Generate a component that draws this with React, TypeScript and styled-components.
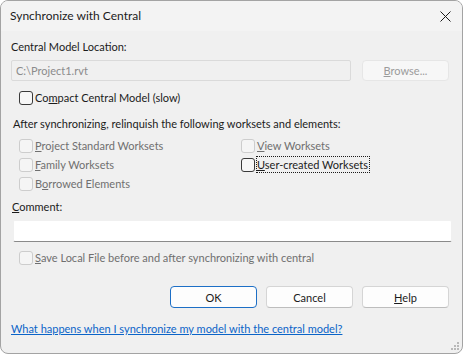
import styled, { createGlobalStyle, css } from "styled-components"

const FONT = `Lato, "Noto Sans", sans-serif`

const GlobalStyle = createGlobalStyle`
  html, body {
    margin: 0;
    padding: 0;
    background: #ffffff;
  }
  body {
    font-family: ${FONT};
    font-size: 11px;
    color: #1b1b1b;
  }
`

const Window = styled.div`
  position: relative;
  box-sizing: border-box;
  width: 463px;
  height: 354px;
  border: 1px solid #a3a3a3;
  border-radius: 8px;
  background: #f0f0f0;
  overflow: hidden;
  display: flex;
  flex-direction: column;
`

const TitleBar = styled.div`
  height: 30px;
  flex-shrink: 0;
  display: flex;
  align-items: center;
  justify-content: space-between;
  padding: 0 9px 0 9px;
  background: #f3f3f3;
`

const Title = styled.span`
  font-size: 12px;
  line-height: 16px;
  color: #1b1b1b;
`

const CloseButton = styled.button`
  width: 16px;
  height: 16px;
  padding: 0;
  border: none;
  background: transparent;
  display: flex;
  align-items: center;
  justify-content: center;
`

const Body = styled.div`
  display: flex;
  flex-direction: column;
  padding: 0 12px 0 9px;
`

const Label = styled.div<{ $top: number; $indent?: number }>`
  margin-top: ${(p) => p.$top}px;
  margin-left: ${(p) => p.$indent ?? 0}px;
  line-height: 16px;
  height: 16px;
  white-space: nowrap;
`

const LocationRow = styled.div`
  margin-top: 5px;
  display: flex;
  gap: 11px;
  height: 21px;
`

const DisabledInput = styled.div`
  flex: 1;
  box-sizing: border-box;
  margin-left: 1px;
  border: 1px solid #dadada;
  border-radius: 2px;
  background: #f0f0f0;
  color: #8b8b8b;
  line-height: 19px;
  padding-left: 4px;
`

const buttonBase = css`
  box-sizing: border-box;
  height: 22px;
  border-radius: 4px;
  font-family: ${FONT};
  font-size: 11px;
  padding: 0;
  display: flex;
  align-items: center;
  justify-content: center;
`

const BrowseButton = styled.button`
  ${buttonBase};
  width: 87px;
  height: 21px;
  margin-right: 1px;
  border: 1px solid #e6e6e6;
  background: #f7f7f7;
  color: #9b9b9b;
`

const CheckRow = styled.label<{ $top?: number; $disabled?: boolean }>`
  margin-top: ${(p) => p.$top ?? 0}px;
  height: 19px;
  display: flex;
  align-items: center;
  gap: 2px;
  padding-left: 9px;
  white-space: nowrap;
  color: ${(p) => (p.$disabled ? "#6f6f6f" : "#1b1b1b")};
`

const Box = styled.span<{ $disabled?: boolean }>`
  box-sizing: border-box;
  width: 14px;
  height: 14px;
  border-radius: 3px;
  border: 1px solid ${(p) => (p.$disabled ? "#cdcdcd" : "#3a3a3a")};
  background: ${(p) => (p.$disabled ? "#f5f5f5" : "#f7f7f7")};
  flex-shrink: 0;
`

const Focus = styled.span`
  outline: 1px dotted #1b1b1b;
  outline-offset: 0px;
  line-height: 15px;
  padding-right: 1px;
`

const Grid = styled.div`
  margin-top: 4px;
  display: grid;
  grid-template-columns: 222px 1fr;
  grid-auto-rows: 19px;
`

const CommentInput = styled.div`
  margin-top: 5px;
  margin-left: 3px;
  margin-right: -2px;
  height: 22px;
  box-sizing: border-box;
  background: #ffffff;
  border: 1px solid #f0f0f0;
  border-bottom: 1px solid #8a8a8a;
  border-radius: 2px;
`

const ButtonRow = styled.div`
  margin-top: 19px;
  display: flex;
  justify-content: flex-end;
  gap: 9px;
  margin-right: 1px;
`

const DialogButton = styled.button<{ $primary?: boolean }>`
  ${buttonBase};
  width: 87px;
  background: #fdfdfd;
  color: #1b1b1b;
  border: 1px solid ${(p) => (p.$primary ? "#1d6fc6" : "#d5d5d5")};
  border-bottom-color: ${(p) => (p.$primary ? "#1d6fc6" : "#bdbdbd")};
`

const HelpLink = styled.a`
  margin-top: 13px;
  line-height: 16px;
  color: #0b64c8;
  text-decoration: underline;
  white-space: nowrap;
  align-self: flex-start;
  margin-left: 1px;
`

const Grip = styled.svg`
  position: absolute;
  right: 2px;
  bottom: 2px;
`

const Key = styled.u``

function Check({
  children,
  disabled,
  top,
}: {
  children: React.ReactNode
  disabled?: boolean
  top?: number
}) {
  return (
    <CheckRow $disabled={disabled} $top={top}>
      <Box $disabled={disabled} />
      <span>{children}</span>
    </CheckRow>
  )
}

export default function App() {
  return (
    <>
      <GlobalStyle />
      <Window>
        <TitleBar>
          <Title>Synchronize with Central</Title>
          <CloseButton aria-label="Close">
            <svg width="11" height="11" viewBox="0 0 11 11">
              <path d="M0.5 0.5 L10.5 10.5 M10.5 0.5 L0.5 10.5" stroke="#1b1b1b" strokeWidth="1" />
            </svg>
          </CloseButton>
        </TitleBar>
        <Body>
          <Label $top={8} $indent={1}>Central Model Location:</Label>
          <LocationRow>
            <DisabledInput>C:\Project1.rvt</DisabledInput>
            <BrowseButton disabled>
              <span><Key>B</Key>rowse...</span>
            </BrowseButton>
          </LocationRow>
          <Check top={7}>
            Co<Key>m</Key>pact Central Model (slow)
          </Check>
          <Label $top={9} $indent={3}>
            After synchronizing, relinquish the following worksets and elements:
          </Label>
          <Grid>
            <Check disabled>
              <Key>P</Key>roject Standard Worksets
            </Check>
            <Check disabled>
              <Key>V</Key>iew Worksets
            </Check>
            <Check disabled>
              <Key>F</Key>amily Worksets
            </Check>
            <CheckRow>
              <Box />
              <Focus>
                <Key>U</Key>ser-created Worksets
              </Focus>
            </CheckRow>
            <Check disabled>
              B<Key>o</Key>rrowed Elements
            </Check>
          </Grid>
          <Label $top={6} $indent={2}>
            <Key>C</Key>omment:
          </Label>
          <CommentInput />
          <Check disabled top={6}>
            <Key>S</Key>ave Local File before and after synchronizing with central
          </Check>
          <ButtonRow>
            <DialogButton $primary>OK</DialogButton>
            <DialogButton>Cancel</DialogButton>
            <DialogButton>
              <span><Key>H</Key>elp</span>
            </DialogButton>
          </ButtonRow>
          <HelpLink href="#">What happens when I synchronize my model with the central model?</HelpLink>
        </Body>
        <Grip width="10" height="10" viewBox="0 0 10 10">
          <g fill="#b8b8b8">
            <rect x="7" y="1" width="2" height="2" />
            <rect x="4" y="4" width="2" height="2" />
            <rect x="7" y="4" width="2" height="2" />
            <rect x="1" y="7" width="2" height="2" />
            <rect x="4" y="7" width="2" height="2" />
            <rect x="7" y="7" width="2" height="2" />
          </g>
        </Grip>
      </Window>
    </>
  )
}
